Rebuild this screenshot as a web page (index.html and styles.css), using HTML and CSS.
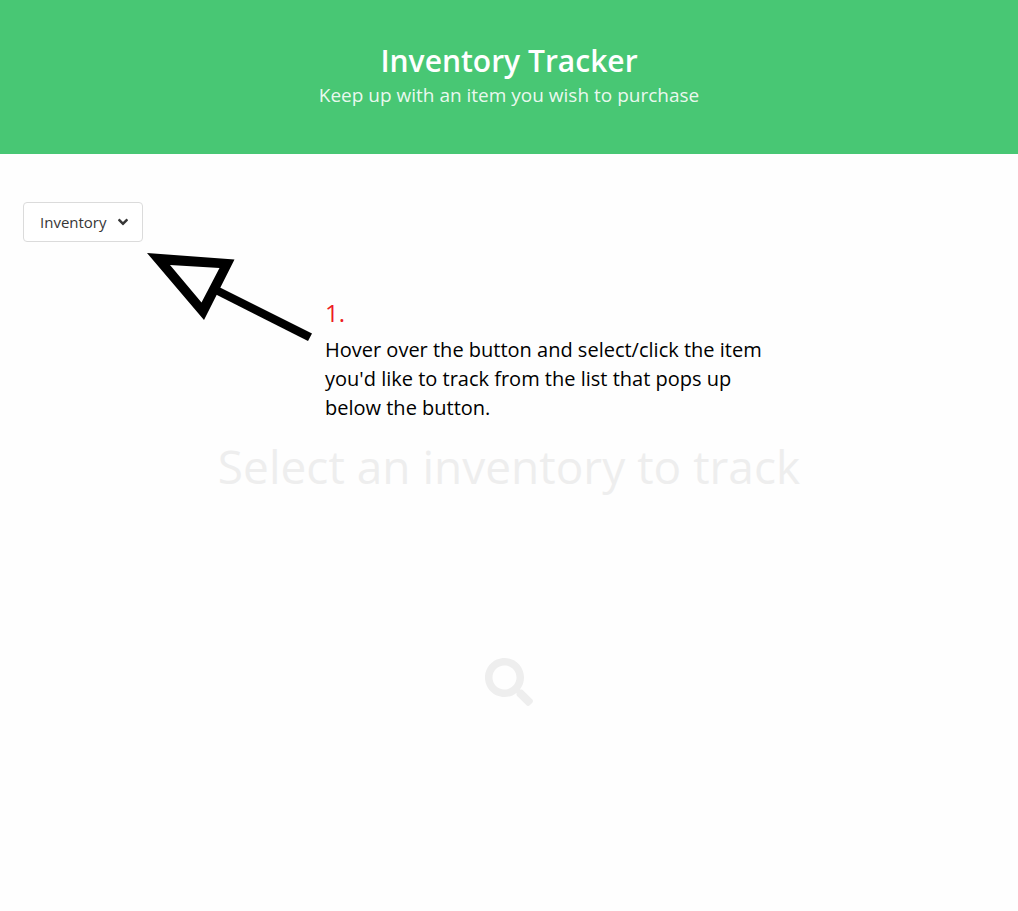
FILE: index.html
```html
<!DOCTYPE html>
<html lang="en">
<head>
<meta charset="utf-8">
<meta name="viewport" content="width=device-width, initial-scale=1">
<title>Inventory Tracker</title>
<link rel="stylesheet" href="styles.css">
</head>
<body>
<header class="hero">
  <h1 class="title">Inventory Tracker</h1>
  <p class="subtitle">Keep up with an item you wish to purchase</p>
</header>
<main class="content">
  <div class="toolbar">
    <button class="dropdown" type="button" aria-haspopup="true">
      <span>Inventory</span>
      <svg class="angle" viewBox="0 0 320 512" aria-hidden="true"><path fill="currentColor" d="M143 352.3L7 216.3c-9.4-9.4-9.4-24.6 0-33.9l22.6-22.6c9.4-9.4 24.6-9.4 33.9 0l96.4 96.4 96.4-96.4c9.4-9.4 24.6-9.4 33.9 0l22.6 22.6c9.4 9.4 9.4 24.6 0 33.9l-136 136c-9.2 9.4-24.4 9.4-33.8 0z"/></svg>
    </button>
    <aside class="callout">
      <svg class="arrow" viewBox="0 0 165 88" aria-hidden="true">
        <path fill-rule="evenodd" d="M0 0L87.5 6.5L57 67ZM23 12L54.5 49.5L72.5 15Z"/>
        <path d="M72 34L165 80.5L161 88L68 41Z"/>
      </svg>
      <div class="callout-body">
        <p class="step">1.</p>
        <p class="hint">Hover over the button and select/click the item<br>you'd like to track from the list that pops up<br>below the button.</p>
      </div>
    </aside>
  </div>
  <section class="empty">
    <p class="empty-text">Select an inventory to track</p>
    <svg class="search" viewBox="0 0 512 512" aria-hidden="true"><path fill="currentColor" d="M505 442.7L405.3 343c-4.5-4.5-10.6-7-17-7H372c27.6-35.3 44-79.7 44-128C416 93.1 322.9 0 208 0S0 93.1 0 208s93.1 208 208 208c48.3 0 92.7-16.4 128-44v16.3c0 6.4 2.5 12.5 7 17l99.7 99.7c9.4 9.4 24.6 9.4 33.9 0l28.3-28.3c9.4-9.4 9.4-24.6.1-34zM208 336c-70.7 0-128-57.2-128-128 0-70.7 57.2-128 128-128 70.7 0 128 57.2 128 128 0 70.7-57.2 128-128 128z"/></svg>
  </section>
</main>
</body>
</html>
```
FILE: styles.css
```css
* {
  box-sizing: border-box;
}

body,
h1,
p {
  margin: 0;
}

body {
  background: #fefefe;
  font-family: "Open Sans", "Noto Sans", sans-serif;
}

.hero {
  padding: 42px 24px 44px;
  background: #48c774;
  text-align: center;
}

.title {
  color: #fff;
  font-size: 30px;
  font-weight: 600;
  line-height: 38px;
}

.subtitle {
  color: rgba(255, 255, 255, 0.9);
  font-size: 19px;
  line-height: 30px;
}

.content {
  padding: 48px 23px;
}

.toolbar {
  position: relative;
  display: flex;
}

.dropdown {
  display: flex;
  align-items: center;
  justify-content: space-between;
  width: 120px;
  height: 40px;
  padding: 0 14px 0 16px;
  border: 1px solid #dbdbdb;
  border-radius: 4px;
  background: #fff;
  color: #363636;
  font-family: inherit;
  font-size: 15px;
}

.angle {
  width: 10px;
  height: 16px;
}

/* Help note pointing at the drop-down. */
.callout {
  position: absolute;
  top: 51px;
  left: 124px;
  display: flex;
  gap: 13px;
  color: #000;
}

.arrow {
  flex: none;
  width: 165px;
  height: 88px;
}

.callout-body {
  padding-top: 42px;
}

.step {
  margin-bottom: 4px;
  color: #ed1c24;
  font-size: 24px;
  line-height: 36px;
}

.hint {
  font-size: 20px;
  line-height: 29px;
  white-space: nowrap;
}

.empty {
  display: flex;
  flex-direction: column;
  align-items: center;
  gap: 156px;
  padding-top: 188px;
  color: #eee;
}

.empty-text {
  font-size: 46px;
  line-height: 72px;
  text-align: center;
}

.search {
  width: 48px;
  height: 48px;
}
```
